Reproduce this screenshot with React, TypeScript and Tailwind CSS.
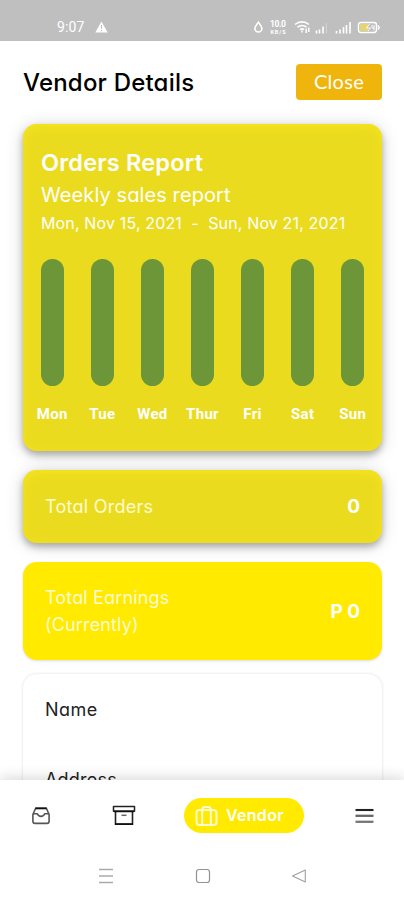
import { useState } from "react";

const days = ["Mon", "Tue", "Wed", "Thur", "Fri", "Sat", "Sun"];

function StatusBar() {
  return (
    <div className="h-[41px] shrink-0 bg-[#bfbfbf] flex items-start pt-[20px] pl-[57px] pr-[24px] text-white">
      <span className="font-[Roboto] text-[14px] leading-[15px] tracking-[0.1px] w-[29px]">
        9:07
      </span>
      <svg className="w-[13px] h-[12px] ml-[9px] mt-[1px]" viewBox="0 0 13 12">
        <path d="M6.5 0.5L12.7 11.5H0.3Z" fill="#fff" />
        <path d="M6.5 4V8M6.5 9V10.3" stroke="#bfbfbf" strokeWidth="1.1" />
      </svg>
      <svg className="w-[128px] h-[16px] ml-auto" viewBox="0 0 128 16" fill="none" stroke="#fff">
        {/* gota */}
        <path d="M6.4 2.2C8.2 4.8 9.9 6.3 9.9 8.5a3.5 3.5 0 0 1-7 0C2.9 6.3 4.6 4.8 6.4 2.2Z" strokeWidth="1.6" />
        {/* velocidade da rede */}
        <text x="18" y="7.4" fontSize="8.5" fontWeight="700" fontFamily="Roboto, sans-serif" fill="#fff" stroke="none" textLength="16">10.0</text>
        <text x="18.5" y="13.8" fontSize="5.4" fontWeight="700" fontFamily="Roboto, sans-serif" fill="#fff" stroke="none" textLength="15">KB/S</text>
        {/* wifi */}
        <path d="M43 4.5C47 1 53 1 57 4.5M45.5 7.2c3-2.2 6.3-2.2 9 0M48 9.6c1.4-1 2.8-1 4 0" strokeWidth="1.6" />
        <path d="M50 12.5V10.5M54.2 8.5V13M56.8 7.5V12" strokeWidth="1.5" />
        {/* sinal */}
        <path d="M64.5 10.5V13.5M67.5 9.5V13.5M71 6.5V13.5" strokeWidth="1.6" />
        <path d="M74.4 3V13.5" strokeWidth="1" opacity="0.35" />
        <path d="M84.5 11V13.5M88 9.5V13.5M91.5 7V13.5M94.5 5V13.5M98 2V13.5" strokeWidth="1.6" />
        {/* bateria */}
        <rect x="106.5" y="2.5" width="18" height="10" rx="2.4" strokeWidth="1.4" />
        <rect x="108" y="4" width="8" height="7" fill="#e3d576" stroke="none" />
        <path d="M126 5.5L127.4 7.5L126 9.5" strokeWidth="1.4" />
        <path d="M117.5 4L114.5 8H118.5L116 11M120 5V8H122.5M122 5V10.5" strokeWidth="0.9" />
      </svg>
    </div>
  );
}

function Header({ onClose }: { onClose: () => void }) {
  return (
    <header className="flex items-center justify-between h-[83px] shrink-0 pl-[23px] pr-[22px]">
      <h1 className="text-[24px] leading-[34px] font-medium tracking-[0.2px] text-black whitespace-nowrap">
        Vendor Details
      </h1>
      <button
        type="button"
        onClick={onClose}
        className="w-[86px] h-9 mb-[1px] rounded-[4px] bg-[#f0b50c] text-white font-[Lato] text-[20px] leading-[34px] pb-[2px] tracking-[0.3px] cursor-pointer"
      >
        Close
      </button>
    </header>
  );
}

function OrdersReport() {
  return (
    <section className="h-[327px] shrink-0 rounded-[14px] bg-[#ebdb1f] pt-[23px] px-[18px] text-white shadow-[0_4px_7px_rgba(0,0,0,0.27),0_2px_18px_rgba(0,0,0,0.16),inset_0_3px_10px_#f5e51d]">
      <h2 className="text-[23.5px] leading-[32px] font-semibold tracking-[0.2px] whitespace-nowrap">
        Orders Report
      </h2>
      <p className="text-[20px] leading-[33px] tracking-[0.1px] whitespace-nowrap">
        Weekly sales report
      </p>
      <p className="text-[16px] leading-[23px] tracking-[0.15px] whitespace-pre">
        Mon, Nov 15, 2021{"  -  "}Sun, Nov 21, 2021
      </p>

      {/* Gráfico semanal */}
      <div className="flex justify-between mt-[24px]">
        {days.map((day) => (
          <div key={day} className="w-[22.5px] flex flex-col items-center">
            <div className="w-full h-[127px] rounded-full bg-[#6c9637]" />
            <span className="mt-[18px] font-[Roboto] font-bold text-[15px] leading-[20px] tracking-[0.3px]">
              {day}
            </span>
          </div>
        ))}
      </div>
    </section>
  );
}

function BottomNav() {
  return (
    <footer className="h-[120px] shrink-0 bg-white relative shadow-[0_-3px_12px_rgba(0,0,0,0.14)]">
      <nav className="flex items-start h-[72px] pt-[18px] text-[#222]">
        <svg className="w-[20px] h-[20px] ml-[31px] mt-[8px]" viewBox="0 0 20 20" fill="none" strokeLinejoin="round">
          <path d="M4.5 2.5L1.9 8.5V15.2Q1.9 17.4 4 17.4H16Q18.1 17.4 18.1 15.2V8.5L15.5 2.5" stroke="#555" strokeWidth="1.6" />
          <path d="M4.2 2.3H15.8" stroke="#111" strokeWidth="2" />
          <path d="M1.9 7.8H6.3C7.5 11.2 12.5 11.2 13.7 7.8H18.1" stroke="#555" strokeWidth="1.6" />
        </svg>
        <svg className="w-[24px] h-[22px] ml-[61px] mt-[6px]" viewBox="0 0 24 22" fill="none" stroke="#222">
          <path d="M1.5 2.5H22.5V7.3H1.5Z" strokeWidth="1.5" strokeLinejoin="round" />
          <path d="M3.5 7.5V20.3H20.5V7.5" strokeWidth="1.6" />
          <path d="M2 7.4H22M3 20.2H21" stroke="#111" strokeWidth="1.7" />
          <path d="M9.5 11.3H14.5" stroke="#666" strokeWidth="1.5" />
        </svg>
        <button
          type="button"
          className="ml-[48px] w-[120px] h-[35px] rounded-full bg-[#ffea00] flex items-center pl-[11px] text-white cursor-pointer"
        >
          <svg className="w-[23px] h-[22px]" viewBox="0 0 23 22" fill="none" stroke="#fffbd0" strokeWidth="2">
            <rect x="1.5" y="5" width="20" height="15" rx="3" />
            <path d="M7.5 5V4Q7.5 2 9.5 2H13.5Q15.5 2 15.5 4V5M7.2 5V20M15.8 5V20" />
          </svg>
          <span className="ml-[8px] mb-[2px] text-[16px] leading-[24px] font-semibold tracking-[0.3px]">
            Vendor
          </span>
        </button>
        <svg className="w-[19px] h-[18px] ml-[51px] mt-[9px]" viewBox="0 0 19 18" fill="none">
          <path d="M0.5 3H18.5" stroke="#222" strokeWidth="2.1" />
          <path d="M0.5 8.8H18.5" stroke="#666" strokeWidth="2.3" />
          <path d="M0.5 14.8H18.5" stroke="#777" strokeWidth="2.3" />
        </svg>
      </nav>

      {/* Botões do sistema */}
      <div className="flex items-center pl-[98px] h-[48px]">
        <svg className="w-[16px] h-[16px]" viewBox="0 0 16 16" fill="none" stroke="#aaa" strokeWidth="1.3">
          <path d="M1 1.5H15M1 8H15M1 14.5H15" />
        </svg>
        <svg className="w-[16px] h-[16px] ml-[81px]" viewBox="0 0 16 16" fill="none" stroke="#929292" strokeWidth="1.2">
          <rect x="1.5" y="1.5" width="13" height="13" rx="2.5" />
        </svg>
        <svg className="w-[16px] h-[16px] ml-[80px]" viewBox="0 0 16 16" fill="none" stroke="#a0a0a0" strokeWidth="1.1" strokeLinejoin="round">
          <path d="M14.3 2V14L1.5 8Z" />
        </svg>
      </div>
    </footer>
  );
}

export default function App() {
  const [open, setOpen] = useState(true);

  return (
    <div className="w-full h-[900px] bg-white flex flex-col overflow-hidden font-[Inter,sans-serif] [font-feature-settings:'cv11']">
      <StatusBar />
      <Header onClose={() => setOpen(!open)} />

      <main className="flex-1 min-h-0 -mt-5 pt-5 overflow-hidden pl-[23px] pr-[22px] flex flex-col">
        <OrdersReport />

        <section className="mt-[19px] h-[73px] shrink-0 rounded-[14px] bg-[#ebdb1f] px-[22px] flex items-center justify-between text-white shadow-[0_4px_7px_rgba(0,0,0,0.27),0_2px_18px_rgba(0,0,0,0.16),inset_0_3px_10px_#f5e51d]">
          <span className="text-[18px] tracking-[0.25px] text-[#fffbd2]">Total Orders</span>
          <span className="text-[19px] font-bold pt-[2px]">0</span>
        </section>

        <section className="mt-[19px] h-[98px] shrink-0 rounded-[14px] bg-[#ffea00] px-[22px] flex items-center justify-between text-white shadow-[0_1px_3px_rgba(0,0,0,0.14)]">
          <span className="text-[18px] leading-[27px] tracking-[0.15px] text-[#fffbd2]">
            Total Earnings
            <br />
            (Currently)
          </span>
          <span className="text-[19px] font-bold pt-[2px]">P 0</span>
        </section>

        <section className="mt-[14px] h-[200px] shrink-0 rounded-[14px] bg-white pt-[22px] px-[22px] text-[#222] shadow-[0_0_3px_rgba(0,0,0,0.15)]">
          <p className="text-[18px] leading-[27px] tracking-[0.5px]">Name</p>
          <p className="text-[18px] leading-[27px] tracking-[0.2px] mt-[43px]">Address</p>
        </section>
      </main>

      <BottomNav />
    </div>
  );
}
